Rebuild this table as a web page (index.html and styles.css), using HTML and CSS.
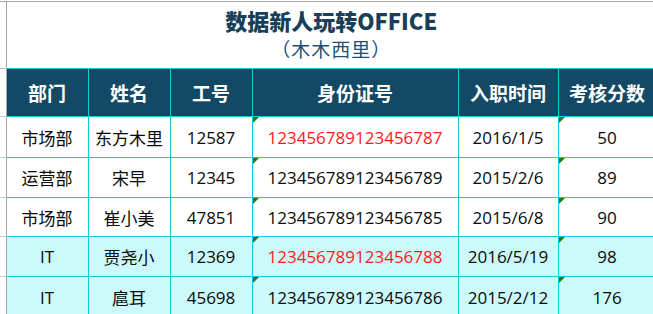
FILE: index.html
```html
<!DOCTYPE html>
<html lang="zh-CN">
<head>
<meta charset="utf-8">
<title>数据新人玩转OFFICE</title>
<link rel="stylesheet" href="styles.css">
</head>
<body>
<table class="sheet">
  <colgroup>
    <col class="c-gut">
    <col class="c-dept">
    <col class="c-name">
    <col class="c-no">
    <col class="c-id">
    <col class="c-date">
    <col class="c-score">
  </colgroup>
  <tr class="r-title">
    <td class="gut"></td>
    <td class="title" colspan="6">
      <div class="title-main">数据新人玩转OFFICE</div>
      <div class="title-sub">（木木西里）</div>
    </td>
  </tr>
  <tr class="r-head">
    <td class="gut"></td>
    <th>部门</th>
    <th>姓名</th>
    <th>工号</th>
    <th>身份证号</th>
    <th>入职时间</th>
    <th>考核分数</th>
  </tr>
  <tr class="r1">
    <td class="gut"></td>
    <td>市场部</td>
    <td>东方木里</td>
    <td>12587</td>
    <td class="txt red">123456789123456787</td>
    <td>2016/1/5</td>
    <td class="txt">50</td>
  </tr>
  <tr class="r2">
    <td class="gut"></td>
    <td>运营部</td>
    <td>宋早</td>
    <td>12345</td>
    <td class="txt">123456789123456789</td>
    <td>2015/2/6</td>
    <td class="txt">89</td>
  </tr>
  <tr class="r3">
    <td class="gut"></td>
    <td>市场部</td>
    <td>崔小美</td>
    <td>47851</td>
    <td class="txt">123456789123456785</td>
    <td>2015/6/8</td>
    <td class="txt">90</td>
  </tr>
  <tr class="r4 hl">
    <td class="gut"></td>
    <td>IT</td>
    <td>贾尧小</td>
    <td>12369</td>
    <td class="txt red">123456789123456788</td>
    <td>2016/5/19</td>
    <td class="txt">98</td>
  </tr>
  <tr class="r5 hl">
    <td class="gut"></td>
    <td>IT</td>
    <td>扈耳</td>
    <td>45698</td>
    <td class="txt">123456789123456786</td>
    <td>2015/2/12</td>
    <td class="txt">176</td>
  </tr>
</table>
</body>
</html>
```

FILE: styles.css
```css
html, body {
  margin: 0;
  padding: 0;
  background: #ffffff;
  overflow: hidden;
}

.sheet {
  border-collapse: collapse;
  table-layout: fixed;
  width: 656px;
  margin-top: 1px;
  font-family: "Open Sans", "Noto Sans CJK SC", sans-serif;
  font-size: 17px;
  color: #0a0a0a;
}

.c-gut { width: 6px; }
.c-dept { width: 82px; }
.c-name { width: 82px; }
.c-no { width: 82px; }
.c-id { width: 206px; }
.c-date { width: 100px; }
.c-score { width: 98px; }

td, th {
  padding: 0;
  text-align: center;
  vertical-align: middle;
  white-space: nowrap;
  border: 1px solid #08d0d8;
}

td.gut {
  border: none;
  border-right: 1px solid #a3a3a3;
  border-bottom: 1px solid #c9c9c9;
}

.r-title td {
  border-top: 1px solid #a8a8a8;
}

.r-title .gut {
  border-bottom: 1px solid #b5b5b5;
}

td.title {
  height: 66px;
  border-left: none;
  border-right: none;
  border-bottom: 1px solid #08d0d8;
  vertical-align: top;
}

.title-main {
  font-family: "Noto Sans CJK SC", sans-serif;
  font-weight: 900;
  font-size: 22px;
  line-height: 26px;
  margin-top: 5px;
  color: #173f59;
}

.title-sub {
  font-family: "Noto Sans CJK SC", sans-serif;
  font-size: 19px;
  line-height: 22px;
  margin-top: 5px;
  letter-spacing: 1px;
  color: #1d4f78;
}

.r-head th {
  height: 47px;
  background: #134964;
  color: #ffffff;
  font-family: "Noto Sans CJK SC", sans-serif;
  font-weight: 700;
  font-size: 19px;
}

.r1 td { height: 40px; }
.r2 td { height: 39px; }
.r3 td { height: 38px; }
.r4 td { height: 39px; }
.r5 td { height: 40px; }

tr.hl td:not(.gut) {
  background: #ccfafb;
}

.red {
  color: #ff1a1a;
}

td.txt {
  position: relative;
}

td.txt::before {
  content: "";
  position: absolute;
  left: 0;
  top: 0;
  width: 0;
  height: 0;
  border-top: 6px solid #13801c;
  border-right: 6px solid transparent;
}
```
